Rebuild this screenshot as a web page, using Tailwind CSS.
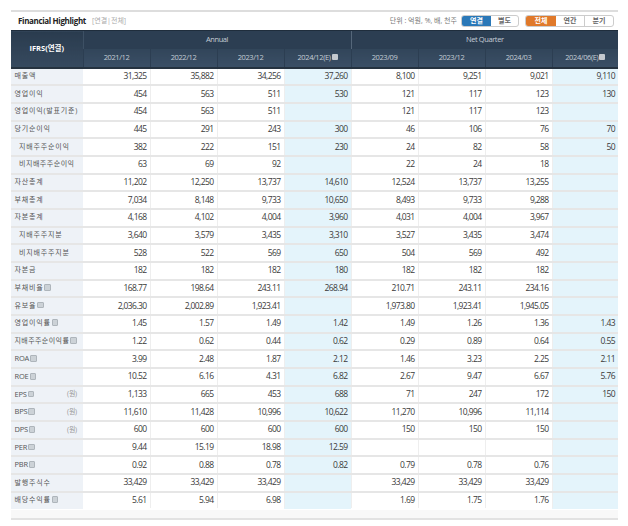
<!DOCTYPE html>
<html lang="ko"><head><meta charset="utf-8"><script src="https://cdn.jsdelivr.net/npm/@tailwindcss/browser@4"></script></head>
<body class="bg-white w-[628px] h-[526px] overflow-hidden font-['Open_Sans','Noto_Sans_CJK_KR',sans-serif] text-[#444]">
<div class="ml-[11px] w-[607px] pt-[10px]">
<div class="h-[20px] border-t-2 border-[#ddd] flex items-center pl-[7px] pr-[4px] bg-white">
<b class="text-[8px] text-[#222] font-bold tracking-[-0.35px]">Financial Highlight</b>
<span class="ml-[6px] text-[7px] text-[#aaa]">[연결|전체]</span>
<span class="ml-auto text-[7px] text-[#777]">단위 : 억원, %, 배, 천주</span>
<div class="ml-[4px] flex h-[12px] w-[58px] border border-[#ccc] rounded-[3px] text-[7px] font-bold overflow-hidden"><span class="w-[29px] bg-[#2a78b8] text-white flex items-center justify-center">연결</span><span class="flex-1 flex items-center justify-center text-[#666]">별도</span></div>
<div class="ml-[6px] flex h-[12px] w-[89px] border border-[#ccc] rounded-[3px] text-[7px] font-bold overflow-hidden"><span class="w-[30px] bg-[#e0792a] text-white flex items-center justify-center">전체</span><span class="flex-1 flex items-center justify-center text-[#666] border-r border-[#ccc]">연간</span><span class="flex-1 flex items-center justify-center text-[#666]">분기</span></div>
</div>
<table class="table-fixed border-collapse w-[607px]">
<colgroup><col class="w-[72px]"><col class="w-[67px]"><col class="w-[67px]"><col class="w-[67px]"><col class="w-[67px]"><col class="w-[67px]"><col class="w-[67px]"><col class="w-[67px]"><col class="w-[66px]"></colgroup>
<thead class="text-[#c3ccd5] text-[7.5px] [&_th]:font-normal [&_th]:tracking-[-0.4px]">
<tr class="h-[18px]">
<th rowspan="2" class="bg-linear-to-b from-[#2a3b4e] to-[#364a5f] text-white text-[7.5px] !font-bold !tracking-normal border-t border-[#1f2d3c] border-b-2 border-b-[#25323f]">IFRS(연결)</th>
<th colspan="4" class="bg-[#2c3e52] border-l border-[#3d5064] border-t border-t-[#1f2d3c]">Annual</th>
<th colspan="4" class="bg-[#2c3e52] border-l border-[#55677a] border-t border-t-[#1f2d3c]">Net Quarter</th></tr>
<tr class="h-[19px] border-b-2 border-[#25323f] [&_th]:bg-linear-to-b [&_th]:from-[#31455a] [&_th]:to-[#3a4f65] [&_th]:border-l [&_th]:border-[#2c3e52]">
<th>2021/12</th><th>2022/12</th><th>2023/12</th>
<th>2024/12(E)<span class="inline-block w-[6px] h-[6px] bg-[#c4c9cf] ml-[1px] rounded-[1px] align-[-0.5px]"></span></th>
<th>2023/09</th><th>2023/12</th><th>2024/03</th>
<th>2024/06(E)<span class="inline-block w-[6px] h-[6px] bg-[#c4c9cf] ml-[1px] rounded-[1px] align-[-0.5px]"></span></th></tr>
</thead>
<tbody class="text-[8.5px] tracking-[-0.6px] font-medium text-[#3a3a3a] [&_tr]:h-[17.68px] [&_tr]:border-b-2 [&_tr]:border-[#e6e6e6] [&_tr:last-child]:border-transparent [&_td]:text-right [&_td]:pr-[3px] [&_td]:border-l [&_td]:border-[#eee] [&_td:nth-child(2)]:border-l-0 [&_td:nth-child(5)]:bg-[#e4f4fb] [&_td:nth-child(9)]:bg-[#e4f4fb] [&_th]:bg-[#eef2f7] [&_th]:font-normal [&_th]:text-left [&_th]:pl-[3.5px] [&_th]:pr-[6px] [&_th]:text-[7px] [&_th]:text-[#555] [&_th]:tracking-[0.8px] [&_th]:whitespace-nowrap [&_i]:inline-block [&_i]:w-[6.5px] [&_i]:h-[6.5px] [&_i]:rounded-[1px] [&_i]:bg-[#ccd2d7] [&_i]:border [&_i]:border-[#aeb5bb] [&_i]:ml-[1px] [&_i]:align-[-0.5px]">
<tr><th>매출액</th><td>31,325</td><td>35,882</td><td>34,256</td><td>37,260</td><td>8,100</td><td>9,251</td><td>9,021</td><td>9,110</td></tr>
<tr><th>영업이익</th><td>454</td><td>563</td><td>511</td><td>530</td><td>121</td><td>117</td><td>123</td><td>130</td></tr>
<tr><th>영업이익(발표기준)</th><td>454</td><td>563</td><td>511</td><td></td><td>121</td><td>117</td><td>123</td><td></td></tr>
<tr><th>당기순이익</th><td>445</td><td>291</td><td>243</td><td>300</td><td>46</td><td>106</td><td>76</td><td>70</td></tr>
<tr><th class="!pl-[8px]">지배주주순이익</th><td>382</td><td>222</td><td>151</td><td>230</td><td>24</td><td>82</td><td>58</td><td>50</td></tr>
<tr><th class="!pl-[8px] !tracking-[0.5px]">비지배주주순이익</th><td>63</td><td>69</td><td>92</td><td></td><td>22</td><td>24</td><td>18</td><td></td></tr>
<tr><th>자산총계</th><td>11,202</td><td>12,250</td><td>13,737</td><td>14,610</td><td>12,524</td><td>13,737</td><td>13,255</td><td></td></tr>
<tr><th>부채총계</th><td>7,034</td><td>8,148</td><td>9,733</td><td>10,650</td><td>8,493</td><td>9,733</td><td>9,288</td><td></td></tr>
<tr><th>자본총계</th><td>4,168</td><td>4,102</td><td>4,004</td><td>3,960</td><td>4,031</td><td>4,004</td><td>3,967</td><td></td></tr>
<tr><th class="!pl-[8px]">지배주주지분</th><td>3,640</td><td>3,579</td><td>3,435</td><td>3,310</td><td>3,527</td><td>3,435</td><td>3,474</td><td></td></tr>
<tr><th class="!pl-[8px]">비지배주주지분</th><td>528</td><td>522</td><td>569</td><td>650</td><td>504</td><td>569</td><td>492</td><td></td></tr>
<tr><th>자본금</th><td>182</td><td>182</td><td>182</td><td>180</td><td>182</td><td>182</td><td>182</td><td></td></tr>
<tr><th>부채비율<i></i></th><td>168.77</td><td>198.64</td><td>243.11</td><td>268.94</td><td>210.71</td><td>243.11</td><td>234.16</td><td></td></tr>
<tr><th>유보율<i></i></th><td>2,036.30</td><td>2,002.89</td><td>1,923.41</td><td></td><td>1,973.80</td><td>1,923.41</td><td>1,945.05</td><td></td></tr>
<tr><th>영업이익률<i></i></th><td>1.45</td><td>1.57</td><td>1.49</td><td>1.42</td><td>1.49</td><td>1.26</td><td>1.36</td><td>1.43</td></tr>
<tr><th class="!tracking-[0.4px]">지배주주순이익률<i></i></th><td>1.22</td><td>0.62</td><td>0.44</td><td>0.62</td><td>0.29</td><td>0.89</td><td>0.64</td><td>0.55</td></tr>
<tr><th class="!tracking-[-0.2px] !text-[7.5px]">ROA<i></i></th><td>3.99</td><td>2.48</td><td>1.87</td><td>2.12</td><td>1.46</td><td>3.23</td><td>2.25</td><td>2.11</td></tr>
<tr><th class="!tracking-[-0.2px] !text-[7.5px]">ROE<i></i></th><td>10.52</td><td>6.16</td><td>4.31</td><td>6.82</td><td>2.67</td><td>9.47</td><td>6.67</td><td>5.76</td></tr>
<tr><th class="!tracking-[-0.2px] !text-[7.5px]"><div class="flex justify-between items-center"><span>EPS<i></i></span><span class="text-[#999] text-[7px]">(원)</span></div></th><td>1,133</td><td>665</td><td>453</td><td>688</td><td>71</td><td>247</td><td>172</td><td>150</td></tr>
<tr><th class="!tracking-[-0.2px] !text-[7.5px]"><div class="flex justify-between items-center"><span>BPS<i></i></span><span class="text-[#999] text-[7px]">(원)</span></div></th><td>11,610</td><td>11,428</td><td>10,996</td><td>10,622</td><td>11,270</td><td>10,996</td><td>11,114</td><td></td></tr>
<tr><th class="!tracking-[-0.2px] !text-[7.5px]"><div class="flex justify-between items-center"><span>DPS<i></i></span><span class="text-[#999] text-[7px]">(원)</span></div></th><td>600</td><td>600</td><td>600</td><td>600</td><td>150</td><td>150</td><td>150</td><td></td></tr>
<tr><th class="!tracking-[-0.2px] !text-[7.5px]">PER<i></i></th><td>9.44</td><td>15.19</td><td>18.98</td><td>12.59</td><td></td><td></td><td></td><td></td></tr>
<tr><th class="!tracking-[-0.2px] !text-[7.5px]">PBR<i></i></th><td>0.92</td><td>0.88</td><td>0.78</td><td>0.82</td><td>0.79</td><td>0.78</td><td>0.76</td><td></td></tr>
<tr><th>발행주식수</th><td>33,429</td><td>33,429</td><td>33,429</td><td></td><td>33,429</td><td>33,429</td><td>33,429</td><td></td></tr>
<tr><th>배당수익률<i></i></th><td>5.61</td><td>5.94</td><td>6.98</td><td></td><td>1.69</td><td>1.75</td><td>1.76</td><td></td></tr>
</tbody></table>
<div class="h-[10px] bg-[#f8f8f8] border-b-2 border-[#e2e2e2]"></div>
</div>
</body></html>
